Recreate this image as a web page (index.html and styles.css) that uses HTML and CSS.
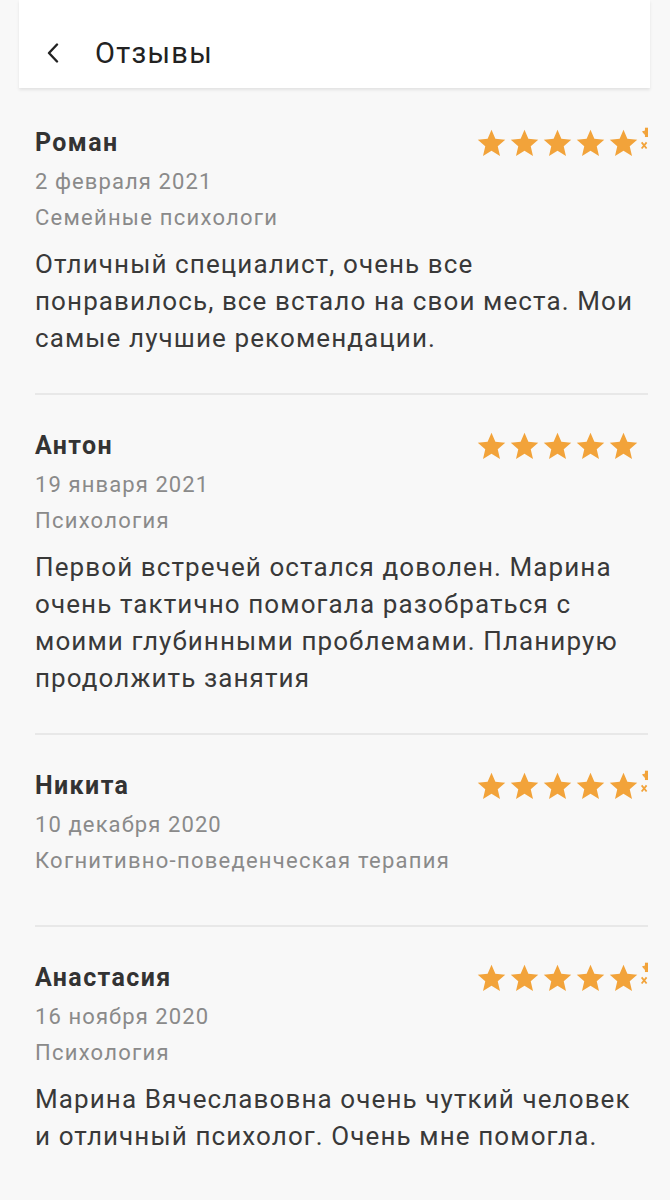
FILE: index.html
```html
<!DOCTYPE html>
<html lang="ru">
<head>
<meta charset="utf-8">
<title>Отзывы</title>
<link rel="stylesheet" href="styles.css">
</head>
<body>
<header class="header">
  <svg class="back" width="14" height="20" viewBox="0 0 14 20"><path d="M11 1.5 L3 10 L11 18.5" fill="none" stroke="#222" stroke-width="2.4" stroke-linecap="round" stroke-linejoin="round"/></svg>
  <h1 class="title">Отзывы</h1>
</header>

<svg width="0" height="0" class="defs">
  <defs>
    <path id="star" d="M12 17.27L18.18 21l-1.64-7.03L22 9.24l-7.19-.61L12 2 9.19 8.63 2 9.24l5.46 4.73L5.82 21z"/>
    <g id="stars5" fill="#f2a33a">
      <use href="#star"/>
      <use href="#star" x="24"/>
      <use href="#star" x="48"/>
      <use href="#star" x="72"/>
      <use href="#star" x="96"/>
    </g>
  </defs>
</svg>

<main class="list">
  <article class="review">
    <div class="top">
      <div class="name">Роман</div>
      <svg class="stars" width="175" height="33" viewBox="0 0 127.27 24"><use href="#stars5"/><g fill="#f2a33a"><polygon points="123.6,0.5 125.8,0.5 125.8,7.3 123.6,7.3"/><polygon points="121.4,3.3 123.6,2.6 123.6,5.8"/></g><path d="M121.2 11.2 L124.8 15.6 M124.8 11.2 L121.2 15.6" stroke="#f2a33a" stroke-width="1.3"/></svg>
    </div>
    <div class="date">2 февраля 2021</div>
    <div class="cat">Семейные психологи</div>
    <p class="text">Отличный специалист, очень все понравилось, все встало на свои места. Мои самые лучшие рекомендации.</p>
  </article>

  <article class="review">
    <div class="top">
      <div class="name">Антон</div>
      <svg class="stars" width="175" height="33" viewBox="0 0 127.27 24"><use href="#stars5"/></svg>
    </div>
    <div class="date">19 января 2021</div>
    <div class="cat">Психология</div>
    <p class="text">Первой встречей остался доволен. Марина очень тактично помогала разобраться с моими глубинными проблемами. Планирую продолжить занятия</p>
  </article>

  <article class="review">
    <div class="top">
      <div class="name">Никита</div>
      <svg class="stars" width="175" height="33" viewBox="0 0 127.27 24"><use href="#stars5"/><g fill="#f2a33a"><polygon points="123.6,0.5 125.8,0.5 125.8,7.3 123.6,7.3"/><polygon points="121.4,3.3 123.6,2.6 123.6,5.8"/></g><path d="M121.2 11.2 L124.8 15.6 M124.8 11.2 L121.2 15.6" stroke="#f2a33a" stroke-width="1.3"/></svg>
    </div>
    <div class="date">10 декабря 2020</div>
    <div class="cat">Когнитивно-поведенческая терапия</div>
    <p class="text"></p>
  </article>

  <article class="review">
    <div class="top">
      <div class="name">Анастасия</div>
      <svg class="stars" width="175" height="33" viewBox="0 0 127.27 24"><use href="#stars5"/><g fill="#f2a33a"><polygon points="123.6,0.5 125.8,0.5 125.8,7.3 123.6,7.3"/><polygon points="121.4,3.3 123.6,2.6 123.6,5.8"/></g><path d="M121.2 11.2 L124.8 15.6 M124.8 11.2 L121.2 15.6" stroke="#f2a33a" stroke-width="1.3"/></svg>
    </div>
    <div class="date">16 ноября 2020</div>
    <div class="cat">Психология</div>
    <p class="text">Марина Вячеславовна очень чуткий человек и отличный психолог. Очень мне помогла.</p>
  </article>
</main>
</body>
</html>
```

FILE: styles.css
```css
* { box-sizing: border-box; }

body {
  margin: 0;
  background: #f8f8f8;
  font-family: Roboto, "Noto Sans", "Liberation Sans", sans-serif;
  color: #333;
}

.defs {
  position: absolute;
  width: 0;
  height: 0;
}

.header {
  height: 88px;
  margin: 0 20px 0 19px;
  background: #fff;
  display: flex;
  align-items: center;
  padding: 18px 0 0 27px;
  box-shadow: 0 2px 3px rgba(0, 0, 0, 0.09);
  position: relative;
}

.back {
  display: block;
  margin-right: 35px;
}

.title {
  margin: 0;
  font-size: 29px;
  font-weight: 400;
  letter-spacing: 1.3px;
  color: #222;
  line-height: 34px;
}

.list {
  margin: 0 22px 0 35px;
  padding-top: 40px;
}

.review {
  padding-bottom: 36px;
  border-bottom: 2px solid #e8e8e8;
}

.review + .review {
  padding-top: 36px;
}

.review:last-child {
  border-bottom: none;
}

.top {
  display: flex;
  justify-content: space-between;
  align-items: flex-start;
  height: 30px;
}

.name {
  font-size: 25px;
  font-weight: 700;
  letter-spacing: 1.4px;
  line-height: 30px;
  color: #333;
}

.stars {
  display: block;
  margin-top: -1px;
  margin-right: -2px;
}

.date {
  margin-top: 4px;
  font-size: 22px;
  letter-spacing: 1.1px;
  line-height: 40px;
  color: #8a8a8a;
}

.cat {
  font-size: 22px;
  letter-spacing: 1.25px;
  line-height: 32px;
  color: #8a8a8a;
}

.text {
  margin: 12px 0 0;
  padding-right: 10px;
  font-size: 26px;
  letter-spacing: 1.1px;
  line-height: 37px;
  color: #393939;
}
```
